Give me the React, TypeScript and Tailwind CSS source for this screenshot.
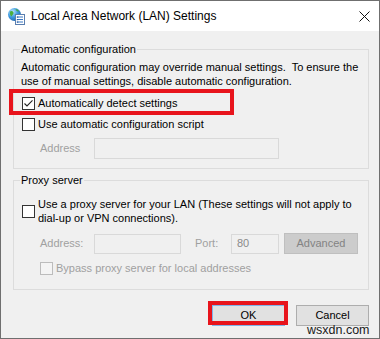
import React from "react";

const FONT = '"Liberation Sans", Arial, sans-serif';

function Check({ checked = false, disabled = false }: { checked?: boolean; disabled?: boolean }) {
  return (
    <span
      className={
        "flex items-center justify-center w-[13px] h-[13px] shrink-0 border " +
        (disabled ? "border-[#bcbcbc] bg-[#f4f4f4]" : "border-[#333333] bg-white")
      }
    >
      {checked && (
        <svg width="11" height="11" viewBox="0 0 11 11">
          <polyline points="1.5,5.5 4,8 9.5,2.3" fill="none" stroke="#222" strokeWidth="1.1" />
        </svg>
      )}
    </span>
  );
}

function AppIcon() {
  return (
    <svg width="18" height="18" viewBox="0 0 18 18" className="shrink-0">
      <defs>
        <radialGradient id="gl" cx="0.35" cy="0.3" r="0.8">
          <stop offset="0" stopColor="#bfe6ff" />
          <stop offset="0.5" stopColor="#3d9be0" />
          <stop offset="1" stopColor="#1c5ea8" />
        </radialGradient>
      </defs>
      <circle cx="7.5" cy="7.5" r="6.5" fill="url(#gl)" />
      <path d="M3 4.5 C4.5 3.5 6 4 6.5 5.5 C7 7 5 8 4.5 9.5 C3.5 9 2.5 7 3 4.5Z" fill="#4caf3c" />
      <path d="M8.5 2 C10 2 11.5 3 12 4.5 C10.5 4.5 9 4 8.5 2Z" fill="#4caf3c" />
      <rect x="8.5" y="7.5" width="9" height="10" fill="#ffffff" stroke="#5a7fb0" strokeWidth="1" />
      <line x1="10" y1="10" x2="16" y2="10" stroke="#3b78c4" strokeWidth="1" />
      <line x1="10" y1="12.5" x2="16" y2="12.5" stroke="#3b78c4" strokeWidth="1" />
      <line x1="10" y1="15" x2="16" y2="15" stroke="#3b78c4" strokeWidth="1" />
      <rect x="9.8" y="9.5" width="1.5" height="1.2" fill="#2f62a8" />
      <rect x="9.8" y="12" width="1.5" height="1.2" fill="#2f62a8" />
      <rect x="9.8" y="14.5" width="1.5" height="1.2" fill="#2f62a8" />
    </svg>
  );
}

export default function App() {
  return (
    <div
      className="relative w-[380px] h-[339px] border border-[#6f6f6f] bg-[#f0f0f0] flex flex-col text-[11px] text-black overflow-hidden"
      style={{ fontFamily: FONT }}
    >
      {/* Title bar */}
      <div className="h-[30px] bg-white flex items-center shrink-0">
        <div className="ml-[6px] mt-[-1px]">
          <AppIcon />
        </div>
        <span className="ml-[6px] text-[12px] leading-none">Local Area Network (LAN) Settings</span>
        <svg width="11" height="11" viewBox="0 0 11 11" className="ml-auto mr-[9px]">
          <line x1="0.5" y1="0.5" x2="10.5" y2="10.5" stroke="#111" strokeWidth="1" />
          <line x1="10.5" y1="0.5" x2="0.5" y2="10.5" stroke="#111" strokeWidth="1" />
        </svg>
      </div>

      {/* Automatic configuration */}
      <fieldset className="ml-[12px] mt-[10px] w-[356px] border border-[#dcdcdc] pb-[9px]">
        <legend className="ml-[6px] px-[1px] leading-[16px]">Automatic configuration</legend>
        <div className="pl-[7px] mt-[3px] leading-[14px] whitespace-pre">
          {"Automatic configuration may override manual settings.  To ensure the\nuse of manual settings, disable automatic configuration."}
        </div>
        <div className="relative mt-[1px] h-[28px] flex items-center pl-[8px]">
          <Check checked />
          <span className="ml-[3px]">Automatically detect settings</span>
          <div className="absolute -left-[5px] top-0 w-[225px] h-[26px] border-4 border-[#e8141c]" />
        </div>
        <div className="h-[14px] flex items-center pl-[8px]">
          <Check />
          <span className="ml-[3px]">Use automatic configuration script</span>
        </div>
        <div className="mt-[7px] flex items-center pl-[26px]">
          <span className="w-[54px] text-[#a0a0a0]">Address</span>
          <div className="w-[185px] h-[21px] border border-[#d9d9d9] bg-[#f0f0f0]" />
        </div>
      </fieldset>

      {/* Proxy server */}
      <fieldset className="ml-[12px] mt-[3px] w-[356px] border border-[#dcdcdc] pb-[14px]">
        <legend className="ml-[6px] px-[1px] leading-[16px]">Proxy server</legend>
        <div className="mt-[9px] h-[28px] flex items-center pl-[8px]">
          <Check />
          <span className="ml-[3px] leading-[14px] whitespace-pre">
            {"Use a proxy server for your LAN (These settings will not apply to\ndial-up or VPN connections)."}
          </span>
        </div>
        <div className="mt-[8px] h-[21px] flex items-center pl-[26px] text-[#a0a0a0]">
          <span className="w-[54px]">Address:</span>
          <div className="w-[87px] h-[20px] border border-[#d9d9d9] bg-[#f0f0f0]" />
          <span className="ml-[14px] w-[36px]">Port:</span>
          <div className="w-[48px] h-[20px] border border-[#d9d9d9] bg-[#f0f0f0] flex items-center pl-[5px] text-[#8a8a8a]">
            80
          </div>
          <div className="ml-[5px] w-[74px] h-[21px] border border-[#bfbfbf] bg-[#cccccc] flex items-center justify-center text-[#838383]">
            Advanced
          </div>
        </div>
        <div className="mt-[7px] h-[14px] flex items-center pl-[26px] text-[#a0a0a0]">
          <Check disabled />
          <span className="ml-[3px]">Bypass proxy server for local addresses</span>
        </div>
      </fieldset>

      {/* Buttons */}
      <div className="mt-[15px] flex justify-end gap-[11px] pr-[10px]">
        <div className="relative w-[73px] h-[21px] border border-[#7eb4ea] bg-[#e1e1e1] flex items-center justify-center">
          OK
          <div className="absolute -left-[5px] -top-[5px] w-[80px] h-[24px] border-4 border-[#e8141c]" />
        </div>
        <div className="w-[73px] h-[21px] border border-[#adadad] bg-[#e1e1e1] flex items-center justify-center">
          Cancel
        </div>
      </div>

      <div className="absolute left-[306px] top-[322px] text-[12.5px] text-[#1a1a1a] leading-[14px]">wsxdn.com</div>
    </div>
  );
}
